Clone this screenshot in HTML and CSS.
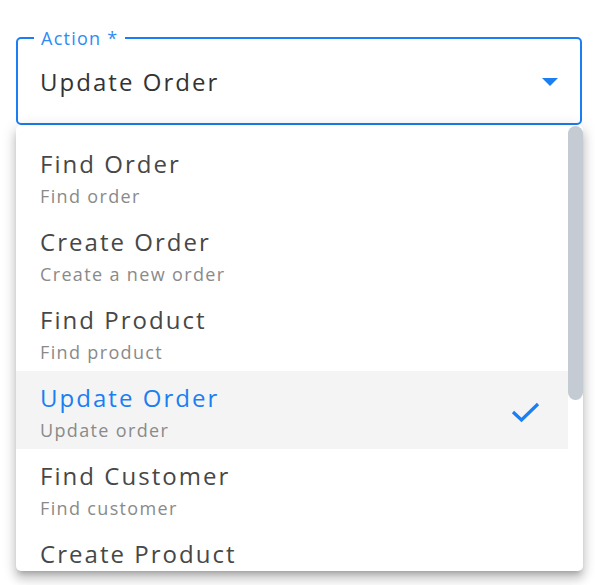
FILE: index.html
```html
<!DOCTYPE html>
<html>
<head>
<meta charset="utf-8">
<link rel="stylesheet" href="styles.css">
</head>
<body>
<div class="page">
  <div class="field">
    <span class="label">Action *</span>
    <span class="value">Update Order</span>
    <span class="arrow"></span>
  </div>
  <div class="menu">
    <ul class="list">
      <li class="item">
        <div class="text"><div class="title">Find Order</div><div class="sub">Find order</div></div>
      </li>
      <li class="item">
        <div class="text"><div class="title">Create Order</div><div class="sub">Create a new order</div></div>
      </li>
      <li class="item">
        <div class="text"><div class="title">Find Product</div><div class="sub">Find product</div></div>
      </li>
      <li class="item selected">
        <div class="text"><div class="title">Update Order</div><div class="sub">Update order</div></div>
        <svg class="check" width="30" height="24" viewBox="0 0 30 24"><polyline points="2,12 10.5,20 27,4" fill="none" stroke="#1b7ef2" stroke-width="3.2"/></svg>
      </li>
      <li class="item">
        <div class="text"><div class="title">Find Customer</div><div class="sub">Find customer</div></div>
      </li>
      <li class="item">
        <div class="text"><div class="title">Create Product</div></div>
      </li>
    </ul>
    <div class="scrollbar"></div>
  </div>
</div>
</body>
</html>
```
FILE: styles.css
```css
html, body {
  margin: 0;
  padding: 0;
  background: #fff;
}
body {
  font-family: "Open Sans", "Noto Sans", sans-serif;
  width: 595px;
  height: 585px;
  overflow: hidden;
}
.page {
  padding-top: 37px;
}
.field {
  position: relative;
  box-sizing: border-box;
  margin-left: 16px;
  width: 566px;
  height: 88px;
  border: 2px solid #1b7ef2;
  border-radius: 5px;
  display: flex;
  align-items: center;
  padding: 0 22px 0 22px;
}
.label {
  position: absolute;
  top: -13px;
  left: 16px;
  padding: 0 6px 0 7px;
  background: #fff;
  color: #2f8bf3;
  font-size: 18px;
  line-height: 24px;
  letter-spacing: 0.07em;
}
.value {
  flex: 1;
  font-size: 24px;
  line-height: 32px;
  color: #333;
  margin-top: 1px;
  letter-spacing: 0.085em;
}
.arrow {
  width: 0;
  height: 0;
  border-left: 8px solid transparent;
  border-right: 8px solid transparent;
  border-top: 8px solid #1b7ef2;
  margin-top: 2px;
}
.menu {
  position: relative;
  z-index: 2;
  margin-left: 16px;
  width: 567px;
  height: 446px;
  background: #fff;
  border-radius: 5px;
  box-shadow: 0 5px 5px -3px rgba(0,0,0,0.2), 0 8px 10px 1px rgba(0,0,0,0.14), 0 3px 14px 2px rgba(0,0,0,0.12);
  overflow: hidden;
  display: flex;
}
.list {
  list-style: none;
  margin: 0;
  padding: 12px 0 0 0;
  flex: 1;
}
.item {
  height: 78px;
  box-sizing: border-box;
  padding: 11px 27px 0 24px;
  display: flex;
  align-items: flex-start;
}
.item .text {
  flex: 1;
}
.title {
  font-size: 24px;
  line-height: 32px;
  color: #474747;
  letter-spacing: 0.085em;
}
.sub {
  margin-top: 4px;
  font-size: 18px;
  line-height: 24px;
  color: #8a8a8a;
  letter-spacing: 0.075em;
}
.selected {
  background: #f4f4f4;
}
.selected .title {
  color: #1b7ef2;
}
.check {
  margin-top: 18px;
}
.scrollbar {
  width: 15px;
  margin-top: 1px;
  height: 274px;
  border-radius: 8px;
  background: #c5cbd2;
}
```
